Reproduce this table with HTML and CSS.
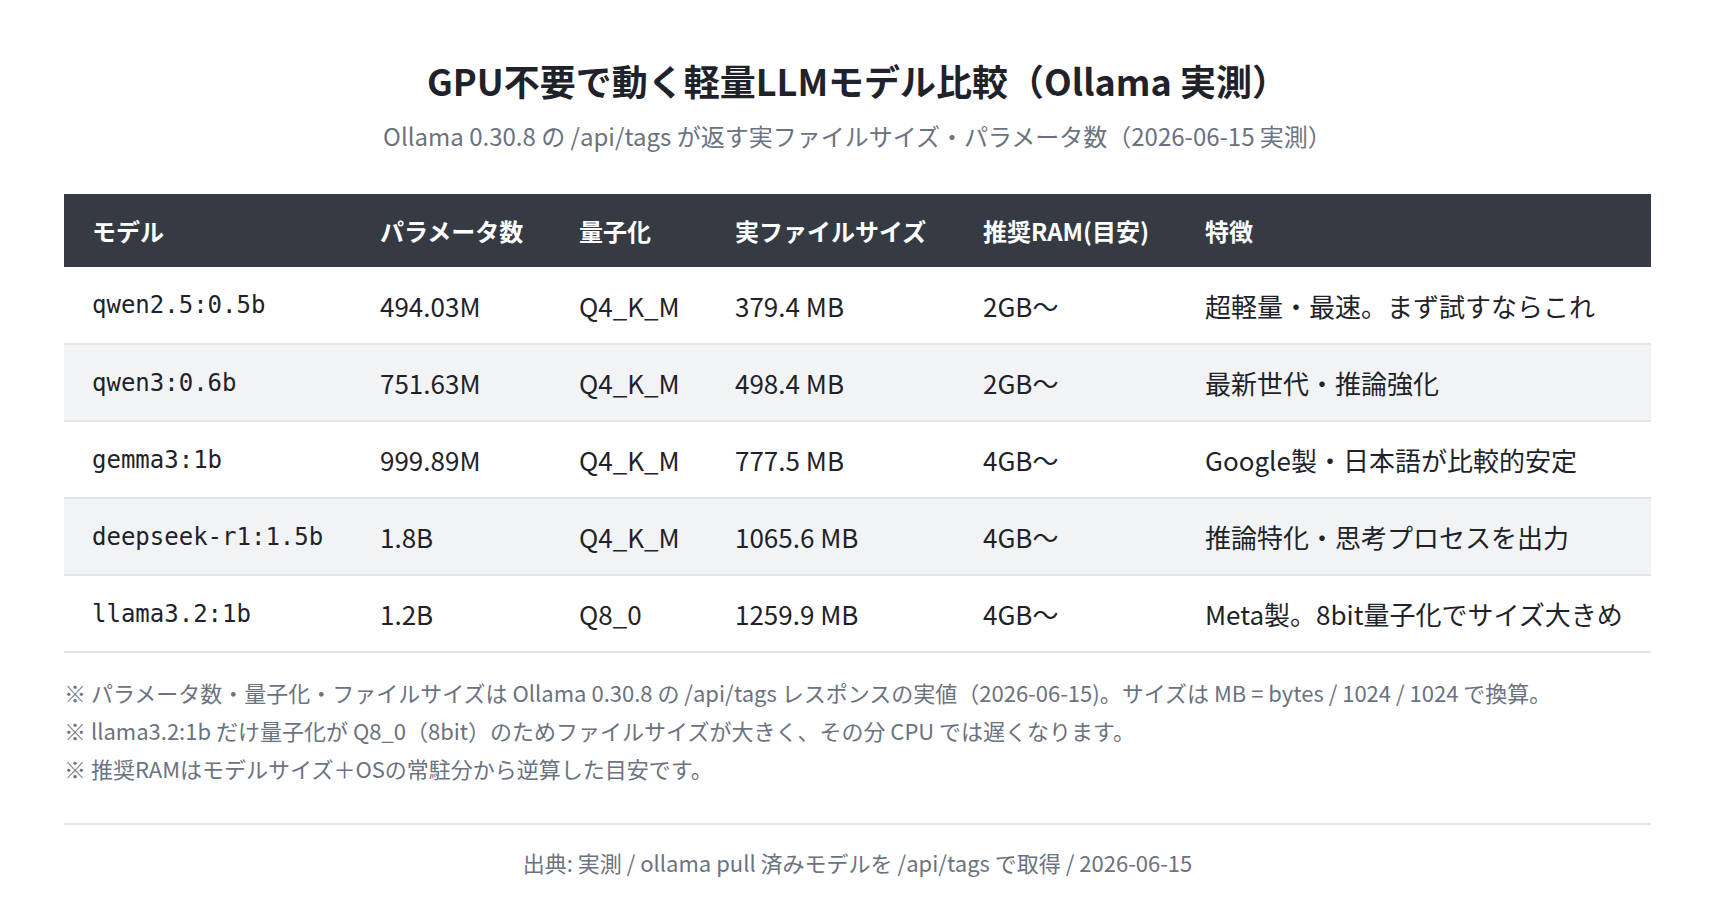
FILE: index.html
```html
<!DOCTYPE html>
<html lang="ja">
<head>
<meta charset="utf-8">
<title>GPU不要で動く軽量LLMモデル比較</title>
<link rel="stylesheet" href="styles.css">
</head>
<body>
<main class="page">
  <h1 class="title">GPU不要で動く軽量LLMモデル比較（Ollama 実測）</h1>
  <p class="subtitle">Ollama 0.30.8 の /api/tags が返す実ファイルサイズ・パラメータ数（2026-06-15 実測）</p>
  <table class="models">
    <colgroup>
      <col class="c1"><col class="c2"><col class="c3"><col class="c4"><col class="c5"><col class="c6">
    </colgroup>
    <thead>
      <tr><th>モデル</th><th>パラメータ数</th><th>量子化</th><th>実ファイルサイズ</th><th>推奨RAM(目安)</th><th>特徴</th></tr>
    </thead>
    <tbody>
      <tr><td class="mono">qwen2.5:0.5b</td><td>494.03M</td><td>Q4_K_M</td><td>379.4 MB</td><td>2GB〜</td><td>超軽量・最速。まず試すならこれ</td></tr>
      <tr><td class="mono">qwen3:0.6b</td><td>751.63M</td><td>Q4_K_M</td><td>498.4 MB</td><td>2GB〜</td><td>最新世代・推論強化</td></tr>
      <tr><td class="mono">gemma3:1b</td><td>999.89M</td><td>Q4_K_M</td><td>777.5 MB</td><td>4GB〜</td><td>Google製・日本語が比較的安定</td></tr>
      <tr><td class="mono">deepseek-r1:1.5b</td><td>1.8B</td><td>Q4_K_M</td><td>1065.6 MB</td><td>4GB〜</td><td>推論特化・思考プロセスを出力</td></tr>
      <tr><td class="mono">llama3.2:1b</td><td>1.2B</td><td>Q8_0</td><td>1259.9 MB</td><td>4GB〜</td><td>Meta製。8bit量子化でサイズ大きめ</td></tr>
    </tbody>
  </table>
  <div class="notes">
    <p>※ パラメータ数・量子化・ファイルサイズは Ollama 0.30.8 の /api/tags レスポンスの実値（2026-06-15)。サイズは MB = bytes / 1024 / 1024 で換算。</p>
    <p>※ llama3.2:1b だけ量子化が Q8_0（8bit）のためファイルサイズが大きく、その分 CPU では遅くなります。</p>
    <p>※ 推奨RAMはモデルサイズ＋OSの常駐分から逆算した目安です。</p>
  </div>
  <footer class="source">出典: 実測 / ollama pull 済みモデルを /api/tags で取得 / 2026-06-15</footer>
</main>
</body>
</html>
```
FILE: styles.css
```css
* { box-sizing: border-box; }
html, body { margin: 0; padding: 0; background: #ffffff; }
body {
  font-family: "Noto Sans CJK JP", "Noto Sans", sans-serif;
  color: #1f2329;
}
.page {
  padding: 56px 65px 0 64px;
}
.title {
  margin: 0;
  text-align: center;
  font-size: 36px;
  line-height: 48px;
  font-weight: 700;
  color: #1f2329;
}
.subtitle {
  margin: 15px 0 0;
  text-align: center;
  font-size: 24px;
  line-height: 33px;
  color: #6b7280;
}
.models {
  margin-top: 42px;
  width: 100%;
  border-collapse: collapse;
  table-layout: fixed;
}
.c1 { width: 288px; }
.c2 { width: 199px; }
.c3 { width: 156px; }
.c4 { width: 248px; }
.c5 { width: 222px; }
.c6 { width: auto; }
.models thead tr {
  background: #363b43;
}
.models th {
  height: 73px;
  padding: 0 28px;
  text-align: left;
  color: #ffffff;
  font-size: 24px;
  font-weight: 700;
  white-space: nowrap;
}
.models td {
  height: 77px;
  padding: 0 28px;
  font-size: 26px;
  color: #1f2329;
  border-bottom: 2px solid #e3e5e8;
  white-space: nowrap;
}
.models tbody tr:nth-child(even) {
  background: #f2f3f5;
}
.models td.mono {
  font-family: "DejaVu Sans Mono", monospace;
  font-size: 24px;
}
.notes {
  margin-top: 20px;
}
.notes p {
  margin: 0;
  font-size: 22px;
  line-height: 38px;
  color: #6b7280;
}
.source {
  margin-top: 36px;
  border-top: 2px solid #e3e5e8;
  padding-top: 18px;
  text-align: center;
  font-size: 22px;
  line-height: 38px;
  color: #6b7280;
}
```
